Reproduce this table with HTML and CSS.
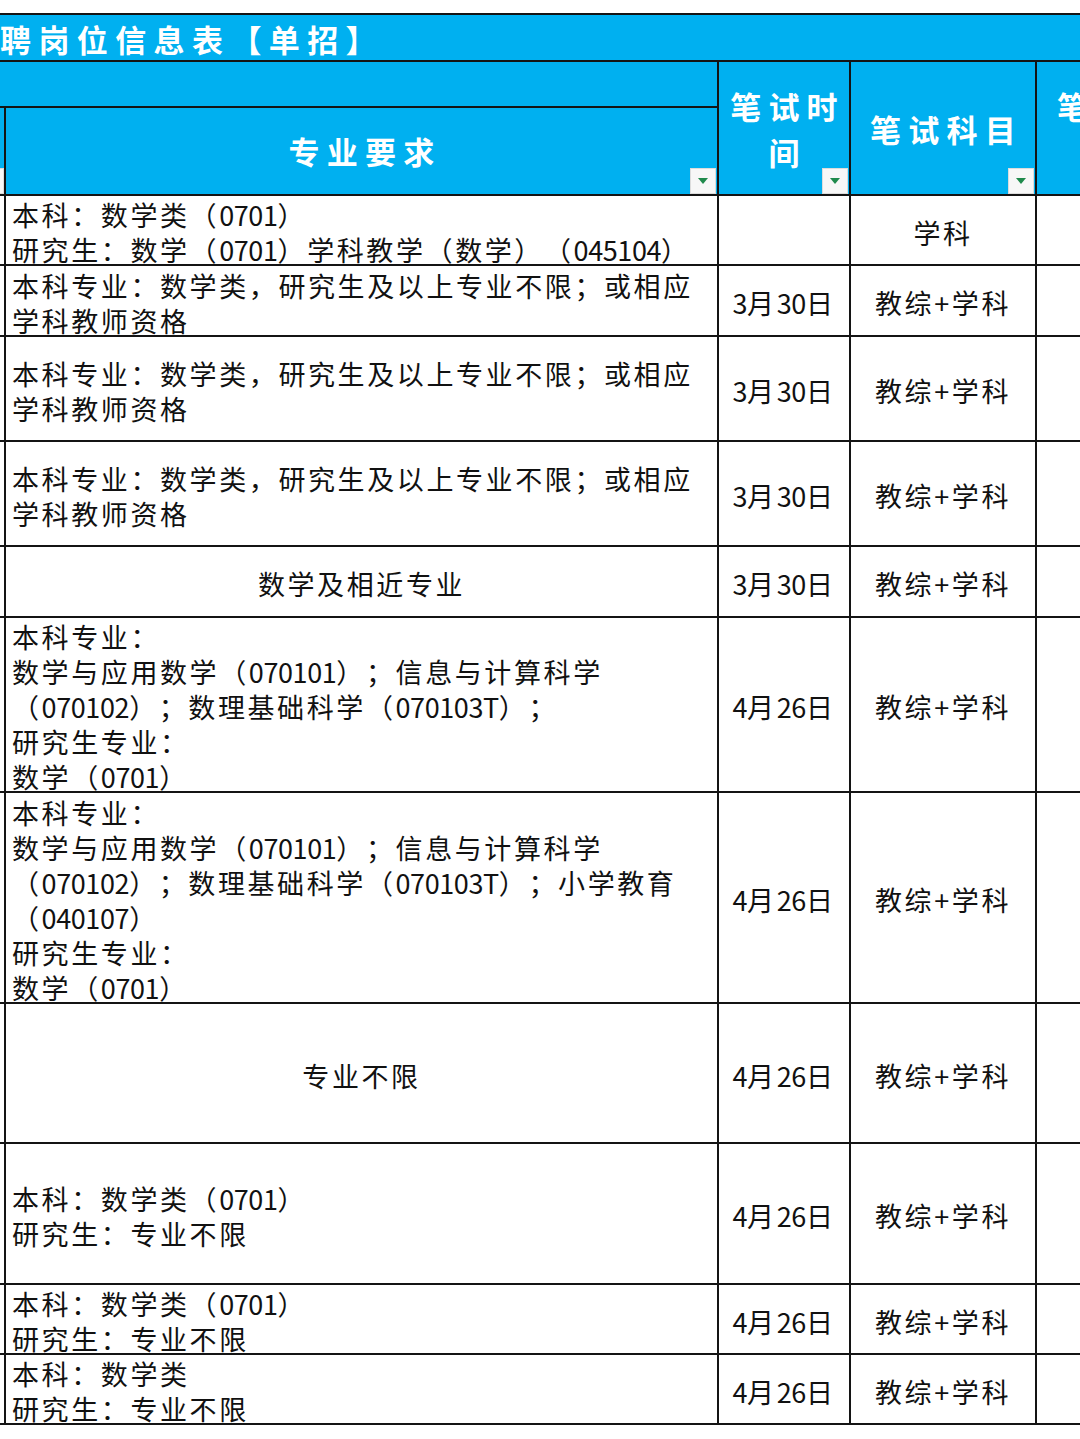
FILE: index.html
```html
<!DOCTYPE html>
<html lang="zh-CN">
<head>
<meta charset="utf-8">
<title>招聘岗位信息表</title>
<link rel="stylesheet" href="styles.css">
</head>
<body>
<div class="sheet">
  <div class="title">聘岗位信息表【单招】</div>

  <div class="hd hd-group"></div>
  <div class="hd hd-time"><span class="hd-text">笔试时<br>间</span><span class="dd"></span></div>
  <div class="hd hd-subj"><span class="hd-text">笔试科目</span><span class="dd"></span></div>
  <div class="hd hd-next"><span class="hd-text">笔试成<br>绩</span></div>
  <div class="hd hd-sliver"><span class="dd dd-cut"></span></div>
  <div class="hd hd-major"><span class="hd-text">专业要求</span><span class="dd"></span></div>

  <div class="c s"></div>
  <div class="c m"><span class="t">本科：数学类（<span class="n">0701</span>）<br>研究生：数学（<span class="n">0701</span>）学科教学（数学）（<span class="n">045104</span>）</span></div>
  <div class="c ctr"></div>
  <div class="c ctr"><span class="t">学科</span></div>
  <div class="c"></div>

  <div class="c s"></div>
  <div class="c m"><span class="t">本科专业：数学类，研究生及以上专业不限；或相应<br>学科教师资格</span></div>
  <div class="c ctr"><span class="t"><span class="n">3</span>月<span class="n">30</span>日</span></div>
  <div class="c ctr"><span class="t">教综+学科</span></div>
  <div class="c"></div>

  <div class="c s"></div>
  <div class="c m"><span class="t">本科专业：数学类，研究生及以上专业不限；或相应<br>学科教师资格</span></div>
  <div class="c ctr"><span class="t"><span class="n">3</span>月<span class="n">30</span>日</span></div>
  <div class="c ctr"><span class="t">教综+学科</span></div>
  <div class="c"></div>

  <div class="c s"></div>
  <div class="c m"><span class="t">本科专业：数学类，研究生及以上专业不限；或相应<br>学科教师资格</span></div>
  <div class="c ctr"><span class="t"><span class="n">3</span>月<span class="n">30</span>日</span></div>
  <div class="c ctr"><span class="t">教综+学科</span></div>
  <div class="c"></div>

  <div class="c s"></div>
  <div class="c ctr"><span class="t">数学及相近专业</span></div>
  <div class="c ctr"><span class="t"><span class="n">3</span>月<span class="n">30</span>日</span></div>
  <div class="c ctr"><span class="t">教综+学科</span></div>
  <div class="c"></div>

  <div class="c s"></div>
  <div class="c m"><span class="t">本科专业：<br>数学与应用数学（<span class="n">070101</span>）；信息与计算科学<br>（<span class="n">070102</span>）；数理基础科学（<span class="n">070103T</span>）；<br>研究生专业：<br>数学（<span class="n">0701</span>）</span></div>
  <div class="c ctr"><span class="t"><span class="n">4</span>月<span class="n">26</span>日</span></div>
  <div class="c ctr"><span class="t">教综+学科</span></div>
  <div class="c"></div>

  <div class="c s"></div>
  <div class="c m"><span class="t">本科专业：<br>数学与应用数学（<span class="n">070101</span>）；信息与计算科学<br>（<span class="n">070102</span>）；数理基础科学（<span class="n">070103T</span>）；小学教育<br>（<span class="n">040107</span>）<br>研究生专业：<br>数学（<span class="n">0701</span>）</span></div>
  <div class="c ctr"><span class="t"><span class="n">4</span>月<span class="n">26</span>日</span></div>
  <div class="c ctr"><span class="t">教综+学科</span></div>
  <div class="c"></div>

  <div class="c s"></div>
  <div class="c ctr"><span class="t">专业不限</span></div>
  <div class="c ctr"><span class="t"><span class="n">4</span>月<span class="n">26</span>日</span></div>
  <div class="c ctr"><span class="t">教综+学科</span></div>
  <div class="c"></div>

  <div class="c s"></div>
  <div class="c m"><span class="t">本科：数学类（<span class="n">0701</span>）<br>研究生：专业不限</span></div>
  <div class="c ctr"><span class="t"><span class="n">4</span>月<span class="n">26</span>日</span></div>
  <div class="c ctr"><span class="t">教综+学科</span></div>
  <div class="c"></div>

  <div class="c s"></div>
  <div class="c m"><span class="t">本科：数学类（<span class="n">0701</span>）<br>研究生：专业不限</span></div>
  <div class="c ctr"><span class="t"><span class="n">4</span>月<span class="n">26</span>日</span></div>
  <div class="c ctr"><span class="t">教综+学科</span></div>
  <div class="c"></div>

  <div class="c s"></div>
  <div class="c m"><span class="t">本科：数学类<br>研究生：专业不限</span></div>
  <div class="c ctr"><span class="t"><span class="n">4</span>月<span class="n">26</span>日</span></div>
  <div class="c ctr"><span class="t">教综+学科</span></div>
  <div class="c"></div>
</div>
</body>
</html>
```

FILE: styles.css
```css
html, body {
  margin: 0;
  padding: 0;
  background: #ffffff;
}
body {
  width: 1080px;
  height: 1439px;
  overflow: hidden;
  font-family: "Noto Sans CJK SC", "Noto Sans", sans-serif;
  text-spacing-trim: space-all;
}
.sheet {
  margin-top: 13px;
  width: 1190px;
  display: grid;
  grid-template-columns: 4px 711px 130px 184px 153px;
  grid-template-rows: 45px 44px 86px 68px 69px 103px 103px 69px 173px 209px 138px 139px 68px 68px;
  gap: 2px;
  padding: 2px 0;
  background: #141414;
}
.title {
  grid-column: 1 / -1;
  background: #00b0f0;
  color: #ffffff;
  font-size: 31px;
  font-weight: 700;
  letter-spacing: 7.4px;
  line-height: 45px;
  padding-top: 1px;
  white-space: nowrap;
  box-sizing: border-box;
}
.hd {
  background: #00b0f0;
  color: #ffffff;
  position: relative;
  display: flex;
  align-items: center;
  justify-content: center;
  text-align: center;
  box-sizing: border-box;
}
.hd-text {
  font-size: 31px;
  font-weight: 700;
  letter-spacing: 7.2px;
  line-height: 46px;
  white-space: nowrap;
  margin-right: -7px;
}
.hd-group { grid-column: 1 / 3; grid-row: 2; }
.hd-time { grid-column: 3; grid-row: 2 / 4; align-items: flex-start; padding-top: 21px; }
.hd-subj { grid-column: 4; grid-row: 2 / 4; padding-top: 2px; }
.hd-next { grid-column: 5; grid-row: 2 / 4; align-items: flex-start; padding-top: 21px; justify-content: flex-start; padding-left: 20px; }
.hd-sliver { grid-column: 1; grid-row: 3; overflow: hidden; }
.hd-major { grid-column: 2; grid-row: 3; padding-top: 0; }

.dd {
  position: absolute;
  right: 1px;
  bottom: 0;
  width: 26px;
  height: 26px;
  background: #f7f7f7;
  box-shadow: inset 0 0 0 1px #dcdcdc;
}
.dd::after {
  content: "";
  position: absolute;
  left: 8px;
  top: 10px;
  width: 0;
  height: 0;
  border-left: 5px solid transparent;
  border-right: 5px solid transparent;
  border-top: 6px solid #1f8a4c;
}
.dd-cut {
  right: 0;
}
.c {
  background: #ffffff;
  color: #111111;
  font-size: 27px;
  letter-spacing: 2.6px;
  line-height: 35px;
  white-space: nowrap;
  display: flex;
  align-items: center;
  padding-top: 4px;
  box-sizing: border-box;
  min-width: 0;
}
.t {
  display: block;
}
.n {
  letter-spacing: -0.4px;
}
.m {
  padding-left: 6px;
}
.ctr {
  justify-content: center;
  text-align: center;
}
```
